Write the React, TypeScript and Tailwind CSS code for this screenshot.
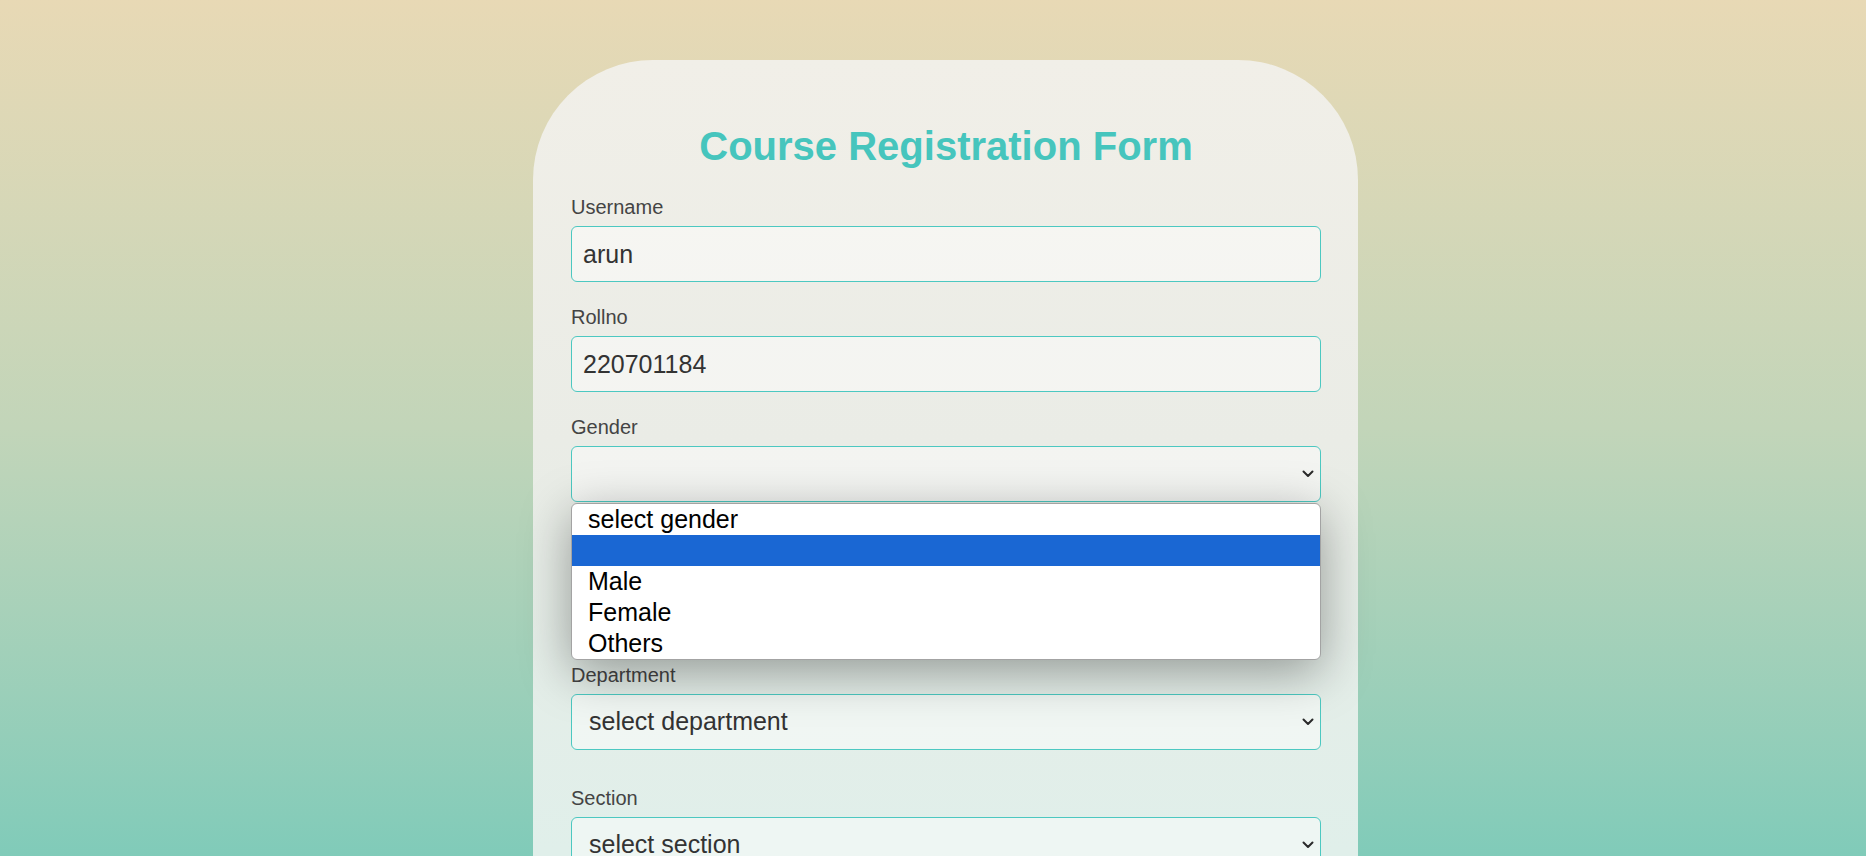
import React from "react";

const Chevron = () => (
  <svg
    className="pointer-events-none absolute right-[7px] top-1/2 -translate-y-1/2"
    width="12"
    height="8"
    viewBox="0 0 12 8"
    fill="none"
  >
    <path d="M1.5 1.5 L6 6 L10.5 1.5" stroke="#2b2b2b" strokeWidth="2" strokeLinecap="round" strokeLinejoin="round" />
  </svg>
);

const Label = ({ children }: { children: React.ReactNode }) => (
  <label className="block text-[20px] leading-[23px] text-[#444444]">{children}</label>
);

const TextInput = ({ value }: { value: string }) => (
  <input
    type="text"
    defaultValue={value}
    className="block h-[56px] w-full rounded-[6px] border border-[#4cc8c1] bg-white/45 px-[11px] text-[25px] text-[#333333] outline-none"
    style={{ fontFamily: '"Liberation Sans", Arial, sans-serif' }}
  />
);

const Select = ({ value, options }: { value: string; options: string[] }) => (
  <div className="relative">
    <select
      defaultValue={value}
      className="block h-[56px] w-full appearance-none rounded-[6px] border border-[#4cc8c1] bg-white/45 pl-[17px] pr-[30px] text-[25px] text-[#333333] outline-none"
      style={{ fontFamily: '"Liberation Sans", Arial, sans-serif' }}
    >
      {options.map((o) => (
        <option key={o} value={o}>
          {o}
        </option>
      ))}
    </select>
    <Chevron />
  </div>
);

export default function App() {
  return (
    <div
      className="h-[856px] w-full overflow-hidden bg-gradient-to-b from-[#e8d9b5] via-[#c2d5b9] to-[#80cbb9]"
      style={{ fontFamily: '"Liberation Sans", Arial, sans-serif' }}
    >
      <div className="flex justify-center pl-[25px] pt-[60px]">
        <div className="min-h-[1200px] w-[825px] rounded-[120px] bg-[linear-gradient(180deg,#f1efe8_0px,#eaece6_380px,#e0efea_790px,#dcefe9_1200px)] px-[38px] pr-[37px] pt-[62px]">
          <h2 className="text-center text-[40px] font-bold leading-[48px] text-[#46c5bd]">
            Course Registration Form
          </h2>

          <div className="mt-[26px]">
            <Label>Username</Label>
            <div className="mt-[7px]">
              <TextInput value="arun" />
            </div>
          </div>

          <div className="mt-[24px]">
            <Label>Rollno</Label>
            <div className="mt-[7px]">
              <TextInput value="220701184" />
            </div>
          </div>

          <div className="relative mt-[24px]">
            <Label>Gender</Label>
            <div className="mt-[7px]">
              <Select value="" options={["select gender", "", "Male", "Female", "Others"]} />
            </div>

            <div className="absolute left-0 right-0 top-[87px] z-10 overflow-hidden rounded-[6px] border border-[#a3a3a3] bg-white text-[25px] leading-[31px] text-black shadow-[0_12px_50px_rgba(0,0,0,0.36)]">
              <div className="h-[31px] pl-[16px]">select gender</div>
              <div className="h-[31px] bg-[#1a67d3] pl-[16px]"></div>
              <div className="h-[31px] pl-[16px]">Male</div>
              <div className="h-[31px] pl-[16px]">Female</div>
              <div className="h-[31px] pl-[16px]">Others</div>
            </div>
          </div>

          <div className="mt-[27px]">
            <Label>Email</Label>
            <div className="mt-[15px]">
              <TextInput value="" />
            </div>
          </div>

          <div className="mt-[41px]">
            <Label>Department</Label>
            <div className="mt-[7px]">
              <Select value="select department" options={["select department", "CSE", "IT", "ECE", "EEE", "MECH"]} />
            </div>
          </div>

          <div className="mt-[37px]">
            <Label>Section</Label>
            <div className="mt-[7px]">
              <Select value="select section" options={["select section", "A", "B", "C", "D"]} />
            </div>
          </div>
        </div>
      </div>
    </div>
  );
}
